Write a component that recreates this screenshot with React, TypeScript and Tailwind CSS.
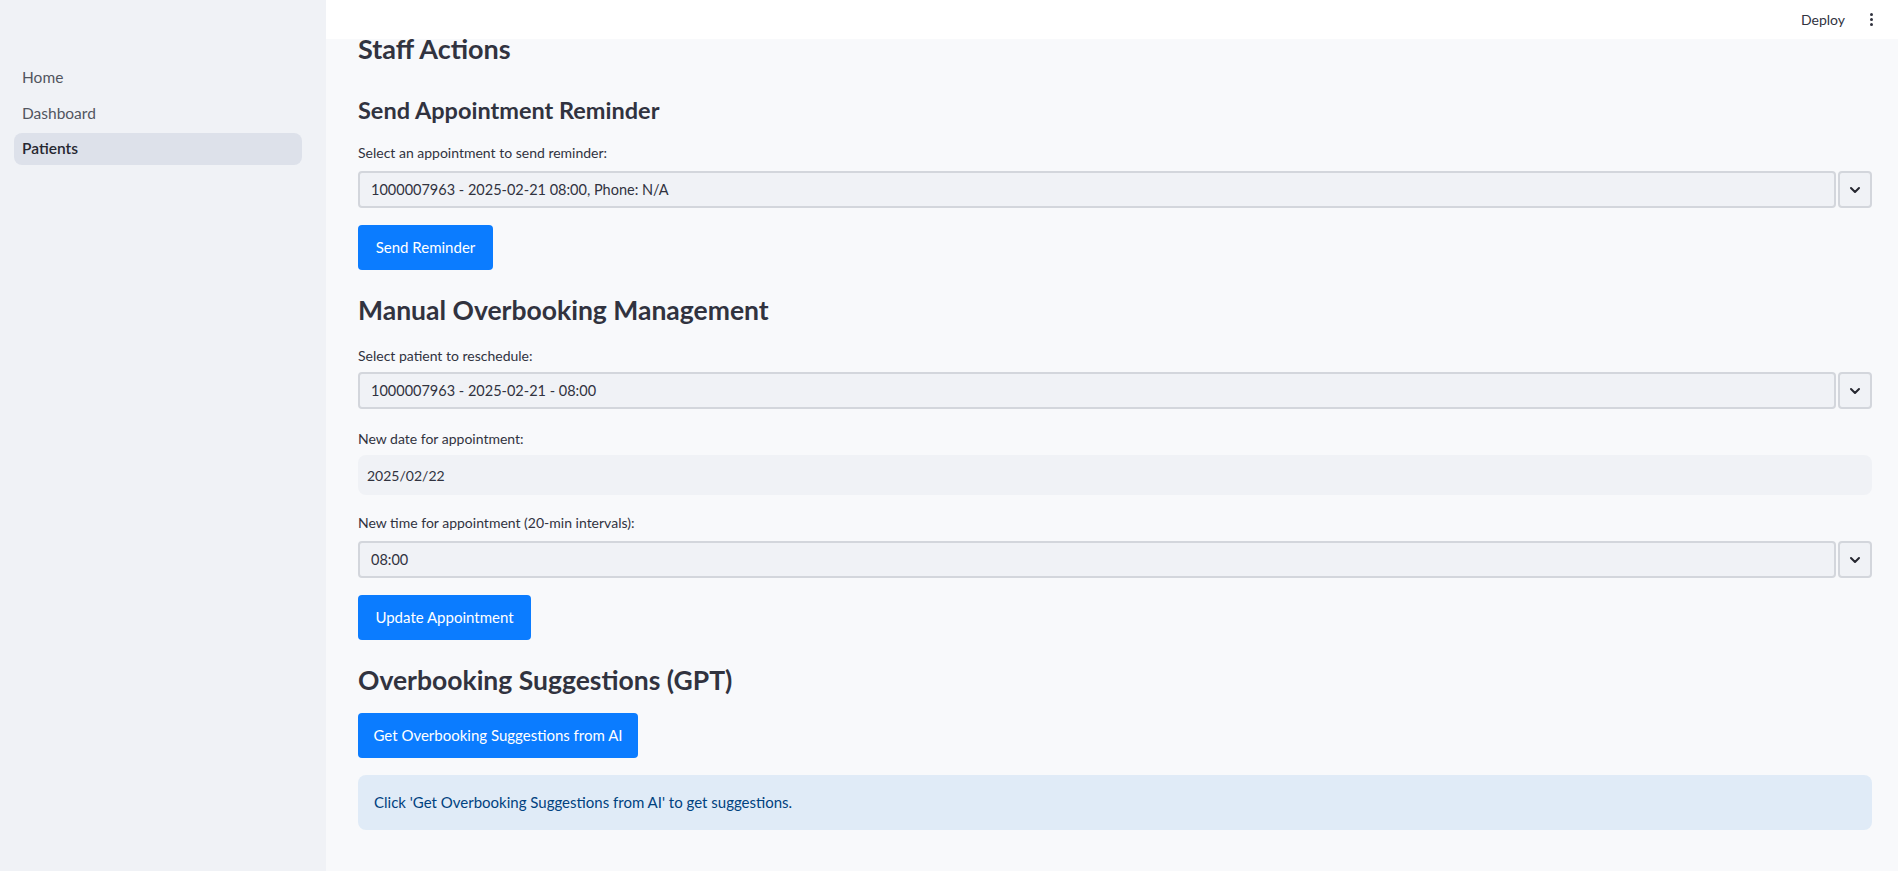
import { useState } from "react";

const font = { fontFamily: "Lato, 'Noto Sans', sans-serif" };

const navItems = ["Home", "Dashboard", "Patients"];

const Chevron = () => (
  <svg width="12" height="8" viewBox="0 0 12 8" fill="none">
    <path d="M2 2l4 4 4-4" stroke="#262730" strokeWidth="2" strokeLinecap="round" strokeLinejoin="round" />
  </svg>
);

interface SelectProps {
  value: string;
}

// selectbox + the separate dropdown toggle on the right
const SelectBox = ({ value }: SelectProps) => (
  <div className="flex h-[37px] gap-[2px]">
    <div className="flex flex-1 items-center rounded-[4px] border-2 border-[#d3d6dc] bg-[#f0f2f6] pl-[11px] text-[14.5px] text-[#31333f]">
      {value}
    </div>
    <div className="flex w-[34px] items-center justify-center rounded-[4px] border-2 border-[#d3d6dc] bg-[#f0f2f6]">
      <Chevron />
    </div>
  </div>
);

const Label = ({ text, mt }: { text: string; mt: string }) => (
  <div className={`${mt} h-[20px] text-[14px] leading-[20px] text-[#31333f]`}>{text}</div>
);

const Button = ({ text, mt, w }: { text: string; mt: string; w: string }) => (
  <button
    className={`${mt} ${w} flex h-[45px] items-center justify-center rounded-[4px] bg-[#0b7cff] text-[15px] font-normal text-white`}
  >
    {text}
  </button>
);

export default function App() {
  const [active, setActive] = useState("Patients");

  return (
    <div className="flex h-screen w-full overflow-hidden bg-[#f8f9fb]" style={font}>
      <aside className="w-[326px] shrink-0 bg-[#f0f2f6] pl-[14px] pr-[24px] pt-[62px]">
        <nav className="flex flex-col gap-[3.5px]">
          {navItems.map((item) => (
            <div
              key={item}
              onClick={() => setActive(item)}
              className={
                "flex h-[32px] cursor-pointer items-center rounded-[8px] px-[8px] text-[15.5px] " +
                (active === item ? "bg-[#dde1ea] font-semibold text-[#262730]" : "text-[#52555f]")
              }
            >
              {item}
            </div>
          ))}
        </nav>
      </aside>

      <main className="flex flex-1 flex-col">
        <header className="flex h-[39px] shrink-0 items-center justify-end bg-white pr-[25px]">
          <span className="text-[14px] text-[#31333f]">Deploy</span>
          <div className="ml-[25px] flex flex-col items-center gap-[2px]">
            <span className="h-[3px] w-[3px] rounded-full bg-[#31333f]" />
            <span className="h-[3px] w-[3px] rounded-full bg-[#31333f]" />
            <span className="h-[3px] w-[3px] rounded-full bg-[#31333f]" />
          </div>
        </header>

        <div className="flex flex-col pl-[32px] pr-[26px]">
          <h2 className="h-[20px] text-[27px] font-bold leading-[20px] text-[#31333f]">Staff Actions</h2>

          <h3 className="mt-[35px] h-[32px] text-[23.5px] font-bold leading-[32px] text-[#31333f]">
            Send Appointment Reminder
          </h3>
          <Label text="Select an appointment to send reminder:" mt="mt-[17px]" />
          <div className="mt-[8px]">
            <SelectBox value="1000007963 - 2025-02-21 08:00, Phone: N/A" />
          </div>
          <Button text="Send Reminder" mt="mt-[17px]" w="w-[135px]" />

          <h2 className="mt-[22px] h-[36px] text-[26.5px] font-bold leading-[36px] text-[#31333f]">
            Manual Overbooking Management
          </h2>
          <Label text="Select patient to reschedule:" mt="mt-[18px]" />
          <div className="mt-[6px]">
            <SelectBox value="1000007963 - 2025-02-21 - 08:00" />
          </div>
          <Label text="New date for appointment:" mt="mt-[20px]" />
          <div className="mt-[6px] flex h-[40px] items-center rounded-[8px] bg-[#f0f2f6] pl-[9px] text-[14px] text-[#31333f]">
            2025/02/22
          </div>
          <Label text="New time for appointment (20-min intervals):" mt="mt-[18px]" />
          <div className="mt-[8px]">
            <SelectBox value="08:00" />
          </div>
          <Button text="Update Appointment" mt="mt-[17px]" w="w-[173px]" />

          <h2 className="mt-[22px] h-[36px] text-[26.5px] font-bold leading-[36px] text-[#31333f]">
            Overbooking Suggestions (GPT)
          </h2>
          <Button text="Get Overbooking Suggestions from AI" mt="mt-[15px]" w="w-[280px]" />
          <div className="mt-[17px] flex h-[55px] items-center rounded-[8px] bg-[#e0ebf7] pl-[16px] text-[15px] text-[#004280]">
            Click 'Get Overbooking Suggestions from AI' to get suggestions.
          </div>
        </div>
      </main>
    </div>
  );
}
